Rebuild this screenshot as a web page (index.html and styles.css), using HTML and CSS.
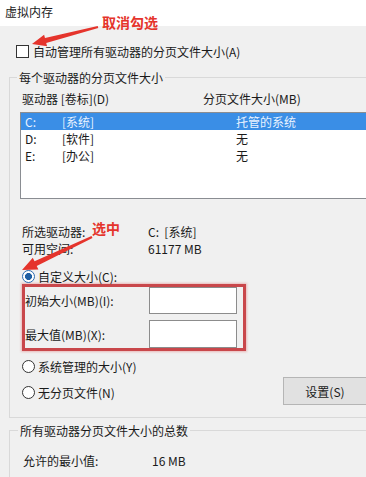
FILE: index.html
```html
<!DOCTYPE html>
<html lang="zh-CN">
<head>
    <meta charset="UTF-8">
    <meta name="viewport" content="width=device-width, initial-scale=1.0">
    <title>虚拟内存</title>
    <link rel="stylesheet" href="styles.css">
</head>
<body>
    <div class="window">
        <div class="titlebar">虚拟内存</div>

        <div class="dialog">
            <label class="check-row">
                <span class="checkbox"></span>
                自动管理所有驱动器的分页文件大小(A)
            </label>

            <div class="group">
                <div class="group-title">每个驱动器的分页文件大小</div>

                <div class="list-head">
                    <span class="col-drive">驱动器 [卷标](D)</span>
                    <span>分页文件大小(MB)</span>
                </div>

                <div class="listbox">
                    <div class="list-row selected">
                        <span class="col-letter">C:</span>
                        <span class="col-label">[系统]</span>
                        <span>托管的系统</span>
                    </div>
                    <div class="list-row">
                        <span class="col-letter">D:</span>
                        <span class="col-label">[软件]</span>
                        <span>无</span>
                    </div>
                    <div class="list-row">
                        <span class="col-letter">E:</span>
                        <span class="col-label">[办公]</span>
                        <span>无</span>
                    </div>
                </div>

                <div class="info-row first">
                    <span class="info-key">所选驱动器:</span>
                    <span>C:&nbsp;&nbsp;[系统]</span>
                </div>
                <div class="info-row">
                    <span class="info-key">可用空间:</span>
                    <span>61177 MB</span>
                </div>

                <div class="radio-row custom">
                    <span class="radio checked"></span>
                    自定义大小(C):
                </div>

                <div class="highlight">
                    <div class="size-row">
                        <span class="size-key">初始大小(MB)(I):</span>
                        <span class="textbox"></span>
                    </div>
                    <div class="size-row">
                        <span class="size-key">最大值(MB)(X):</span>
                        <span class="textbox"></span>
                    </div>
                </div>

                <div class="options">
                    <div class="option-list">
                        <div class="radio-row">
                            <span class="radio"></span>
                            系统管理的大小(Y)
                        </div>
                        <div class="radio-row">
                            <span class="radio"></span>
                            无分页文件(N)
                        </div>
                    </div>
                    <button class="button">设置(S)</button>
                </div>
            </div>

            <div class="group total">
                <div class="group-title">所有驱动器分页文件大小的总数</div>
                <div class="info-row min-row">
                    <span class="info-key narrow">允许的最小值:</span>
                    <span>16 MB</span>
                </div>
            </div>
        </div>

        <!-- red annotations drawn over the dialog -->
        <svg class="arrows" width="366" height="477" viewBox="0 0 366 477">
            <polygon points="32,44 44.1,34.7 45,38.1 97.75,26 98.25,28 46.2,42.9 47.1,46.3"/>
            <polygon points="22,270 32.8,257.7 34.5,261.3 91.5,235.9 92.5,238.1 36.7,265.9 38.4,269.5"/>
        </svg>
        <div class="note note-uncheck">取消勾选</div>
        <div class="note note-select">选中</div>
    </div>
</body>
</html>
```

FILE: styles.css
```css
:root {
    --face: #f0f0f0;
    --line: #d9d9d9;
    --text: #1a1a1a;
    --select: #3a8ee6;
    --mark: #e5342c;
    --box: #c9474b;
}

body {
    margin: 0;
    font-family: "Noto Sans CJK SC", "Noto Sans", sans-serif;
    font-size: 12px;
    color: var(--text);
    background-color: var(--face);
    overflow: hidden;
}

.window {
    position: relative;
    width: 366px;
    height: 477px;
    overflow: hidden;
}

.titlebar {
    height: 26px;
    line-height: 24px;
    padding-left: 5px;
    background-color: #ffffff;
}

.dialog {
    padding-top: 16px;
}

.check-row {
    display: flex;
    align-items: center;
    height: 18px;
    padding-left: 16px;
    gap: 4px;
}

.checkbox {
    width: 11px;
    height: 11px;
    border: 1px solid #333333;
    background-color: #ffffff;
}

.group {
    width: 440px;
    margin: 17px 0 0 9px;
    border: 1px solid var(--line);
    padding: 0 0 12px 10px;
}

.group-title {
    width: fit-content;
    margin: -9px 0 0 -3px;
    padding: 0 2px;
    line-height: 18px;
    background-color: var(--face);
}

.list-head {
    display: flex;
    margin-top: 4px;
    padding-left: 2px;
    line-height: 16px;
}

.col-drive {
    width: 181px;
}

.listbox {
    height: 85px;
    margin-top: 5px;
    border: 1px solid #8a8d92;
    background-color: #ffffff;
}

.list-row {
    display: flex;
    height: 17px;
    line-height: 17px;
    padding-left: 4px;
}

.list-row.selected {
    background-color: var(--select);
    color: #e8f2ff;
}

.col-letter {
    width: 37px;
}

.col-label {
    width: 174px;
}

.info-row {
    display: flex;
    height: 17px;
    line-height: 17px;
    padding-left: 2px;
}

.info-row.first {
    margin-top: 24px;
}

.info-key {
    width: 126px;
}

.radio-row {
    display: flex;
    align-items: center;
    height: 16px;
    padding-left: 2px;
    gap: 3px;
}

.radio-row.custom {
    margin-top: 11px;
}

.radio {
    box-sizing: border-box;
    width: 13px;
    height: 13px;
    border: 1px solid #333333;
    border-radius: 50%;
    background-color: #ffffff;
}

.radio.checked {
    border-color: #2b6cb0;
    background: radial-gradient(circle, #1f5fa3 0 3.2px, #ffffff 3.8px);
}

.highlight {
    width: 218px;
    margin-left: 2px;
    border: 3px solid var(--box);
    box-shadow: 0 0 2px 1px rgba(229, 120, 120, 0.45);
    display: flex;
    flex-direction: column;
    gap: 6px;
}

.size-row {
    display: flex;
    align-items: center;
    height: 27px;
}

.size-row + .size-row {
    height: 28px;
}

.size-key {
    width: 124px;
}

.textbox {
    box-sizing: border-box;
    width: 88px;
    height: 100%;
    border: 1px solid #8c8c8c;
    background-color: #ffffff;
}

.options {
    display: flex;
    align-items: flex-start;
    margin-top: 7px;
}

.option-list {
    width: 263px;
    display: flex;
    flex-direction: column;
    gap: 10px;
}

.button {
    width: 84px;
    height: 28px;
    margin-top: 19px;
    border: 1px solid #b5b5b5;
    background-color: #e1e1e1;
    font-family: inherit;
    font-size: 12px;
    color: var(--text);
    padding: 0;
}

.group.total {
    margin-top: 12px;
    padding-bottom: 30px;
}

.group.total .group-title {
    margin-left: -2px;
}

.min-row {
    margin-top: 12px;
    padding-left: 3px;
}

.info-key.narrow {
    width: 129px;
}

.arrows {
    position: absolute;
    top: 0;
    left: 0;
    pointer-events: none;
    fill: var(--mark);
}

.note {
    position: absolute;
    font-size: 14px;
    font-weight: 700;
    line-height: 18px;
    color: var(--mark);
}

.note-uncheck {
    left: 102px;
    top: 13px;
}

.note-select {
    left: 92px;
    top: 219px;
}
```
